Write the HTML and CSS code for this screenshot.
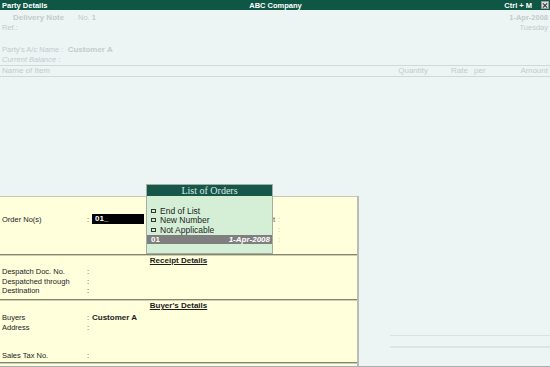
FILE: index.html
```html
<!DOCTYPE html>
<html lang="en">
<head>
    <meta charset="UTF-8">
    <title>Party Details</title>
    <link rel="stylesheet" href="styles.css">
</head>
<body>

<div class="app">
    <div class="titlebar">
        <span class="tb-left">Party Details</span>
        <span class="tb-center">ABC Company</span>
        <span class="tb-right">
            Ctrl + M
            <span class="close-btn">
                <svg width="7" height="7" viewBox="0 0 7 7"><path d="M1 1 L6 6 M6 1 L1 6" stroke="#333" stroke-width="1.2"/></svg>
            </span>
        </span>
    </div>

    <!-- the voucher behind the form, shown faded -->
    <div class="voucher">
        <div class="vh">
            <div class="vh-left">
                <div class="vno"><b class="vtype">Delivery Note</b><span class="vnum">No. <b>1</b></span></div>
                <div>Ref.:</div>
            </div>
            <div class="vh-right">
                <div><b>1-Apr-2008</b></div>
                <div>Tuesday</div>
            </div>
        </div>
        <div class="party">
            <div>Party's A/c Name : &nbsp;<b>Customer A</b></div>
            <div class="italic">Current Balance :</div>
        </div>
        <div class="cols">
            <span>Name of Item</span>
            <span class="right">Quantity</span>
            <span class="right">Rate</span>
            <span class="per">per</span>
            <span class="right">Amount</span>
        </div>
        <div class="items"></div>
        <div class="totals">
            <div class="tline"></div>
        </div>
    </div>

    <!-- party details form -->
    <div class="party-form">
        <div class="section order-sec">
            <div class="row">
                <span class="lbl">Order No(s)</span>
                <span class="colon">:</span>
                <span class="order-input">01_</span>
                <span class="rtail">t</span>
                <span class="rcolon">:</span>
            </div>
            <div class="row">
                <span class="rspace"></span>
                <span class="rcolon">:</span>
            </div>
            <div class="row">
                <span class="rspace"></span>
                <span class="rcolon">:</span>
            </div>
        </div>

        <div class="section receipt-sec">
            <div class="sec-title"><span>Receipt Details</span></div>
            <div class="row"><span class="lbl">Despatch Doc. No.</span><span class="colon">:</span></div>
            <div class="row"><span class="lbl">Despatched through</span><span class="colon">:</span></div>
            <div class="row"><span class="lbl">Destination</span><span class="colon">:</span></div>
        </div>

        <div class="section buyer-sec">
            <div class="sec-title"><span>Buyer's Details</span></div>
            <div class="row first"><span class="lbl">Buyers</span><span class="colon">:</span><b class="val">Customer A</b></div>
            <div class="row"><span class="lbl">Address</span><span class="colon">:</span></div>
            <div class="row"></div>
            <div class="row"></div>
            <div class="row"><span class="lbl">Sales Tax No.</span><span class="colon">:</span></div>
        </div>
    </div>

    <!-- list of orders popup -->
    <div class="popup">
        <div class="popup-title">List of Orders</div>
        <ul class="popup-list">
            <li><span class="box"></span>End of List</li>
            <li><span class="box"></span>New Number</li>
            <li><span class="box"></span>Not Applicable</li>
            <li class="selected"><b>01</b><b class="odate">1-Apr-2008</b></li>
        </ul>
    </div>
</div>

</body>
</html>
```

FILE: styles.css
```css
body {
    margin: 0;
    padding: 0;
    font-family: 'Liberation Sans', Arial, sans-serif;
    font-size: 7.5px;
    color: #222;
    background-color: #ecf4f4;
}

.app {
    position: relative;
    width: 550px;
    height: 367px;
    overflow: hidden;
    background-color: #ecf4f4;
    box-sizing: border-box;
    border-bottom: 1px solid #a9aeae;
}

/* title bar */
.titlebar {
    display: flex;
    align-items: center;
    height: 10px;
    background-color: #0f5745;
    color: #fff;
    font-weight: bold;
    font-size: 7.5px;
    padding: 0 1px 0 2px;
}

.tb-left,
.tb-right {
    flex: 1;
}

.tb-right {
    display: flex;
    justify-content: flex-end;
    align-items: center;
    gap: 9px;
}

.close-btn {
    display: flex;
    align-items: center;
    justify-content: center;
    width: 8px;
    height: 8px;
    background-color: #dcdcdc;
    border: 1px solid #9a9a9a;
    box-sizing: border-box;
}

/* faded voucher */
.voucher {
    display: flex;
    flex-direction: column;
    height: 356px;
    color: #c6cbcb;
    line-height: 10px;
}

.vh {
    display: flex;
    justify-content: space-between;
    padding: 3px 2px 0 2px;
}

.vtype {
    display: inline-block;
    margin-left: 11px;
    width: 65px;
    font-size: 8px;
}

.vh-right {
    text-align: right;
}

.party {
    padding: 12px 2px 0 2px;
}

.party b {
    font-size: 8px;
}

.italic {
    font-style: italic;
}

.cols {
    display: grid;
    grid-template-columns: 1fr 60px 40px 20px 60px;
    padding: 0 2px;
    border-top: 1px solid #d2d7d7;
    border-bottom: 1px solid #d2d7d7;
    font-size: 8px;
}

.cols .right {
    text-align: right;
}

.cols .per {
    padding-left: 6px;
}

.items {
    flex: 1;
}

.totals {
    margin-left: 390px;
    height: 30px;
    border-top: 1px solid #dbe1e1;
}

.tline {
    margin-top: 10px;
    border-top: 2px solid #dfe4e4;
}

/* party details form */
.party-form {
    position: absolute;
    left: 0;
    top: 196px;
    width: 359px;
    height: 171px;
    background-color: #ffffdc;
    border-top: 1px solid #c3c6ba;
    border-right: 2px solid #b9bcae;
    box-sizing: border-box;
    color: #1c1c1c;
}

.section {
    border-bottom: 1px solid #858569;
    box-shadow: 0 1px 0 #cfcfb6;
}

.row {
    display: flex;
    align-items: center;
    height: 9.5px;
    padding-left: 2px;
}

.lbl {
    width: 85px;
}

.colon {
    width: 5px;
}

.val {
    font-size: 8px;
}

.order-sec {
    height: 58px;
    padding-top: 17px;
    box-sizing: border-box;
}

.order-sec .row {
    height: 10px;
}

.order-input {
    width: 52px;
    height: 10px;
    line-height: 10px;
    background-color: #000;
    color: #fff;
    font-weight: bold;
    font-size: 8px;
    padding-left: 3px;
    box-sizing: border-box;
}

.rtail {
    width: 131px;
    text-align: right;
    color: #555;
}

.rspace {
    width: 273px;
}

.rcolon {
    margin-left: 3px;
    color: #b9b9a6;
}

.receipt-sec {
    height: 43px;
    margin-top: 1px;
}

.buyer-sec {
    height: 61px;
    margin-top: 1px;
}

.buyer-sec .row.first {
    margin-top: 2px;
}

.sec-title {
    text-align: center;
    font-weight: bold;
    font-size: 8px;
    line-height: 10px;
    height: 10px;
    margin-bottom: 1px;
}

.sec-title span {
    text-decoration: underline;
}

/* list of orders popup */
.popup {
    position: absolute;
    left: 146px;
    top: 184px;
    width: 127px;
    height: 70px;
    background-color: #d4efd6;
    border: 1px solid #a3aea4;
    box-sizing: border-box;
}

.popup-title {
    height: 11px;
    line-height: 11px;
    background-color: #17574a;
    color: #dbe9e2;
    text-align: center;
    font-family: 'Liberation Serif', 'Times New Roman', serif;
    font-size: 10px;
}

.popup-list {
    list-style-type: none;
    margin: 0;
    padding: 10px 0 0 0;
    font-size: 8.5px;
    color: #1e1e1e;
}

.popup-list li {
    display: flex;
    align-items: center;
    height: 9.5px;
    padding: 0 2px 0 4px;
}

.box {
    display: inline-block;
    width: 5px;
    height: 4px;
    border: 1px solid #333;
    box-sizing: border-box;
    margin-right: 4px;
}

.popup-list li.selected {
    justify-content: space-between;
    background-color: #7f7f7f;
    color: #fff;
    font-size: 8px;
}

.odate {
    font-style: italic;
}
```
